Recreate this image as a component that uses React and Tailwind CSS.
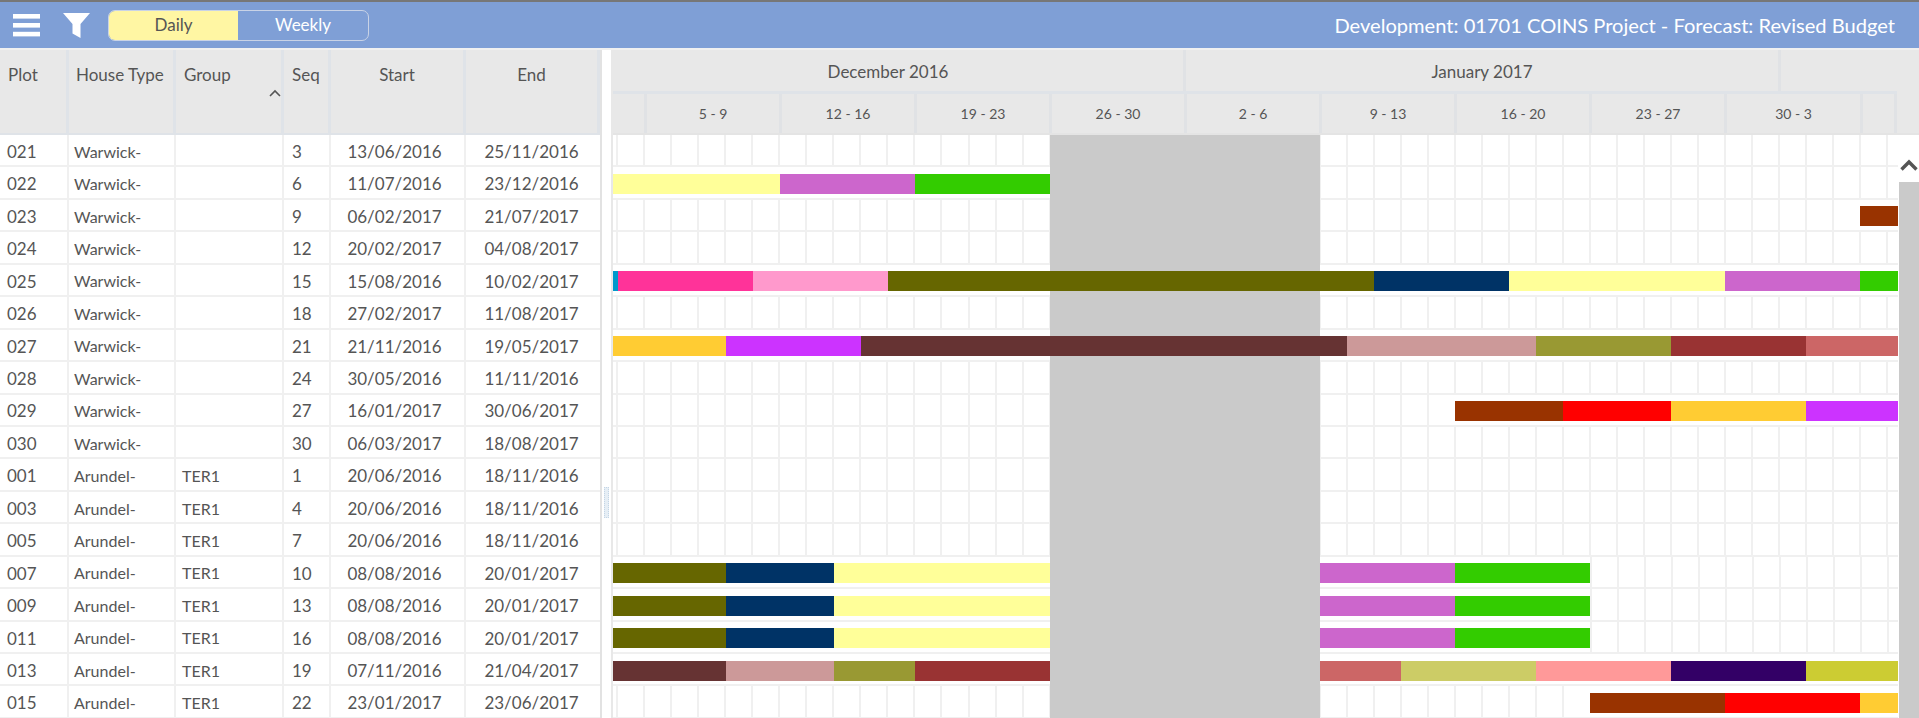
import React from 'react';

const Y = 'bg-[#ffff99]', PU = 'bg-[#cc66cc]', GR = 'bg-[#33cc00]', OL = 'bg-[#666600]', NA = 'bg-[#003366]';
const BR = 'bg-[#663333]', RO = 'bg-[#cc9999]', O2 = 'bg-[#999933]', DR = 'bg-[#993333]', CO = 'bg-[#cc6666]';
const RU = 'bg-[#993300]', RE = 'bg-[#ff0000]', OR = 'bg-[#ffcc33]', VI = 'bg-[#cc33ff]';

const CHART_START = 613;
const CHART_END = 1898;

const terraceBars = [
  [613, 726, OL], [726, 834, NA], [834, 1050, Y], [1050, 1320, null], [1320, 1455, PU], [1455, 1590, GR],
];

const rows = [
  { plot: '021', type: 'Warwick-', group: '', seq: 3, start: '13/06/2016', end: '25/11/2016', bars: [] },
  { plot: '022', type: 'Warwick-', group: '', seq: 6, start: '11/07/2016', end: '23/12/2016',
    bars: [[613, 780, Y], [780, 915, PU], [915, 1050, GR]] },
  { plot: '023', type: 'Warwick-', group: '', seq: 9, start: '06/02/2017', end: '21/07/2017',
    bars: [[1860, 1898, RU]] },
  { plot: '024', type: 'Warwick-', group: '', seq: 12, start: '20/02/2017', end: '04/08/2017', bars: [] },
  { plot: '025', type: 'Warwick-', group: '', seq: 15, start: '15/08/2016', end: '10/02/2017',
    bars: [[613, 618, 'bg-[#0099cc]'], [618, 753, 'bg-[#ff3399]'], [753, 888, 'bg-[#ff99cc]'], [888, 1374, OL], [1374, 1509, NA], [1509, 1725, Y], [1725, 1860, PU], [1860, 1898, GR]] },
  { plot: '026', type: 'Warwick-', group: '', seq: 18, start: '27/02/2017', end: '11/08/2017', bars: [] },
  { plot: '027', type: 'Warwick-', group: '', seq: 21, start: '21/11/2016', end: '19/05/2017',
    bars: [[613, 726, OR], [726, 861, VI], [861, 1347, BR], [1347, 1536, RO], [1536, 1671, O2], [1671, 1806, DR], [1806, 1898, CO]] },
  { plot: '028', type: 'Warwick-', group: '', seq: 24, start: '30/05/2016', end: '11/11/2016', bars: [] },
  { plot: '029', type: 'Warwick-', group: '', seq: 27, start: '16/01/2017', end: '30/06/2017',
    bars: [[1455, 1563, RU], [1563, 1671, RE], [1671, 1806, OR], [1806, 1898, VI]] },
  { plot: '030', type: 'Warwick-', group: '', seq: 30, start: '06/03/2017', end: '18/08/2017', bars: [] },
  { plot: '001', type: 'Arundel-', group: 'TER1', seq: 1, start: '20/06/2016', end: '18/11/2016', bars: [] },
  { plot: '003', type: 'Arundel-', group: 'TER1', seq: 4, start: '20/06/2016', end: '18/11/2016', bars: [] },
  { plot: '005', type: 'Arundel-', group: 'TER1', seq: 7, start: '20/06/2016', end: '18/11/2016', bars: [] },
  { plot: '007', type: 'Arundel-', group: 'TER1', seq: 10, start: '08/08/2016', end: '20/01/2017', bars: terraceBars },
  { plot: '009', type: 'Arundel-', group: 'TER1', seq: 13, start: '08/08/2016', end: '20/01/2017', bars: terraceBars },
  { plot: '011', type: 'Arundel-', group: 'TER1', seq: 16, start: '08/08/2016', end: '20/01/2017', bars: terraceBars },
  { plot: '013', type: 'Arundel-', group: 'TER1', seq: 19, start: '07/11/2016', end: '21/04/2017',
    bars: [[613, 726, BR], [726, 834, RO], [834, 915, O2], [915, 1050, DR], [1050, 1320, null], [1320, 1401, CO], [1401, 1536, 'bg-[#cccc66]'], [1536, 1671, 'bg-[#ff9999]'], [1671, 1806, 'bg-[#330066]'], [1806, 1898, 'bg-[#cccc33]']] },
  { plot: '015', type: 'Arundel-', group: 'TER1', seq: 22, start: '23/01/2017', end: '23/06/2017',
    bars: [[1590, 1725, RU], [1725, 1860, RE], [1860, 1898, OR]] },
];

const weeks = [
  { label: '', width: 34 }, { label: '5 - 9', width: 135 }, { label: '12 - 16', width: 135 }, { label: '19 - 23', width: 135 },
  { label: '26 - 30', width: 135 }, { label: '2 - 6', width: 135 }, { label: '9 - 13', width: 135 }, { label: '16 - 20', width: 135 },
  { label: '23 - 27', width: 135 }, { label: '30 - 3', width: 136 }, { label: '', width: 34 },
];

// grid cells for an empty stretch of a row, the lines sit on a fixed 27px day raster
const GridCells = ({ from, to }) => {
  const lines = [];
  for (let k = 0; k < 50; k++) {
    const x = 618.3 + 27.02 * k;
    if (x > from + 1 && x <= to) lines.push(x);
  }
  let last = from;
  const cells = lines.map((x) => {
    const w = x - last;
    last = x;
    return <div key={x} className="h-full shrink-0 border-r-2 border-[#f0f0f0]" style={{ width: w }} />;
  });
  return (
    <div className="flex h-full shrink-0" style={{ width: to - from }}>
      {cells}
    </div>
  );
};

const GanttRow = ({ bars }) => {
  const items = [];
  let x = CHART_START;
  bars.forEach(([from, to, color]) => {
    if (from > x) items.push(<GridCells key={x} from={x} to={from} />);
    items.push(
      <div key={from} className="h-full shrink-0 pt-[6.5px]" style={{ width: to - from }}>
        {color && <div className={`relative z-10 h-5 ${color}`} />}
      </div>
    );
    x = to;
  });
  if (x < CHART_END) items.push(<GridCells key={x} from={x} to={CHART_END} />);
  return <div className="flex h-[32.44px] border-b-2 border-[#f0f0f0] bg-white">{items}</div>;
};

const HeaderCell = ({ className, children }) => (
  <div className={`h-full shrink-0 border-r-[3px] border-[#dfe3e8] bg-[#e8e8e8] pt-[12px] text-[17px] ${className}`}>{children}</div>
);

const Cell = ({ className, children }) => (
  <div className={`flex h-full shrink-0 items-center border-r-2 border-[#f0f0f0] pt-[3px] ${className}`}>{children}</div>
);

export default function App() {
  return (
    <div className="flex h-[718px] w-[1919px] flex-col overflow-hidden bg-white text-[16px] text-[#555555] font-['Lato','Noto_Sans',sans-serif]">
      {/* Toolbar */}
      <div className="flex h-[48px] shrink-0 items-center border-t-[2px] border-[#777777] bg-[#7f9fd6] pr-[24px]">
        <svg width="27" height="23" viewBox="0 0 27 23" className="ml-[13px] shrink-0" fill="#ffffff">
          <rect x="0" y="0" width="27" height="4.6" />
          <rect x="0" y="9" width="27" height="4.6" />
          <rect x="0" y="17.8" width="27" height="4.6" />
        </svg>
        <svg width="27" height="25" viewBox="0 0 27 25" className="ml-[23px] shrink-0" fill="#ffffff">
          <path d="M0 0 H27 L17.5 11 V25 L9.5 20.5 V11 Z" />
        </svg>
        <div className="ml-[18px] flex h-[31px] w-[261px] shrink-0 overflow-hidden rounded-[7px] border-[1.5px] border-[#c9d3e6] text-[17px]">
          <div className="flex w-[129px] items-center justify-center bg-[#fff6a3]">Daily</div>
          <div className="flex flex-1 items-center justify-center text-white">Weekly</div>
        </div>
        <div className="ml-auto text-[20.1px] text-white">Development: 01701 COINS Project - Forecast: Revised Budget</div>
      </div>

      <div className="relative flex min-h-0 flex-1 border-t-2 border-[#f0f0f0]">
        {/* Left table */}
        <div className="w-[602px] shrink-0 border-r-2 border-[#e2e2e2]">
          <div className="flex h-[85px] border-b-2 border-[#dfe3e8]">
            <HeaderCell className="w-[69px] pl-[8px]">Plot</HeaderCell>
            <HeaderCell className="w-[107px] pl-[7px]">House Type</HeaderCell>
            <HeaderCell className="relative w-[108px] pl-[8px]">
              Group
              <svg width="12" height="8" viewBox="0 0 12 8" className="absolute right-0 top-[39px]" fill="none" stroke="#555555" strokeWidth="1.6">
                <polyline points="1,7 6,2 11,7" />
              </svg>
            </HeaderCell>
            <HeaderCell className="w-[47px] pl-[8px]">Seq</HeaderCell>
            <HeaderCell className="w-[135px] text-center">Start</HeaderCell>
            <HeaderCell className="w-[134px] text-center">End</HeaderCell>
          </div>
          {rows.map((r) => (
            <div key={r.plot} className="flex h-[32.44px] border-b-2 border-[#f0f0f0] text-[17px]">
              <Cell className="w-[69px] pl-[7px]">{r.plot}</Cell>
              <Cell className="w-[107px] pl-[5px] text-[16px]">{r.type}</Cell>
              <Cell className="w-[108px] pl-[6px] text-[16px]">{r.group}</Cell>
              <Cell className="w-[47px] pl-[8px]">{r.seq}</Cell>
              <Cell className="w-[135px] justify-center pr-[6px]">{r.start}</Cell>
              <div className="flex h-full w-[134px] shrink-0 items-center justify-center pr-[3px] pt-[3px]">{r.end}</div>
            </div>
          ))}
        </div>

        {/* Splitter */}
        <div className="flex w-[11px] shrink-0 flex-col items-center border-r-2 border-[#e8e8e8] bg-white pr-[1px] pt-[437px]">
          <div className="h-[31px] w-[5px] border border-dotted border-[#c3d5e6] bg-[#e6eef5]" />
        </div>

        {/* Gantt */}
        <div className="relative min-w-0 flex-1">
          <div className="flex h-[85px] border-b-2 border-[#e4e4e4] text-[#555555]">
            <div className="w-[1284px] shrink-0">
              <div className="flex h-[41px] border-b-[3px] border-[#dfe3e8] box-content">
                <div className="flex w-[573px] shrink-0 items-center justify-center border-r-[3px] border-[#e0e2e5] bg-[#e8e8e8] pr-[20px] pt-[2px] text-[17px]">December 2016</div>
                <div className="flex w-[595px] shrink-0 items-center justify-center border-r-[3px] border-[#e0e2e5] bg-[#e8e8e8] pt-[2px] text-[17px]">January 2017</div>
                <div className="flex-1 bg-[#e8e8e8]" />
              </div>
              <div className="flex h-[39px]">
                {weeks.map((w, i) => (
                  <div key={i} className="flex h-full shrink-0 items-center justify-center border-r-[3px] border-[#e0e2e5] bg-[#e8e8e8] text-[14px]" style={{ width: w.width }}>
                    {w.label}
                  </div>
                ))}
              </div>
            </div>
            <div className="flex-1 bg-[#e8e8e8]" />
          </div>

          <div className="relative flex">
            <div className="w-[1285px] shrink-0">
              {rows.map((r) => (
                <GanttRow key={r.plot} bars={r.bars} />
              ))}
            </div>
            {/* Non-working period */}
            <div className="absolute bottom-0 left-[437px] top-0 z-[5] w-[270px] bg-[#cacaca]" />
            {/* Scrollbar */}
            <div className="ml-px flex flex-1 flex-col">
              <div className="flex h-[47px] items-start justify-center pt-[24px]">
                <svg width="18" height="12" viewBox="0 0 18 12" fill="none" stroke="#555555" strokeWidth="3.4">
                  <polyline points="1.5,10.5 9,3 16.5,10.5" />
                </svg>
              </div>
              <div className="flex-1 bg-[#cacaca]" />
            </div>
          </div>
        </div>
      </div>
    </div>
  );
}
